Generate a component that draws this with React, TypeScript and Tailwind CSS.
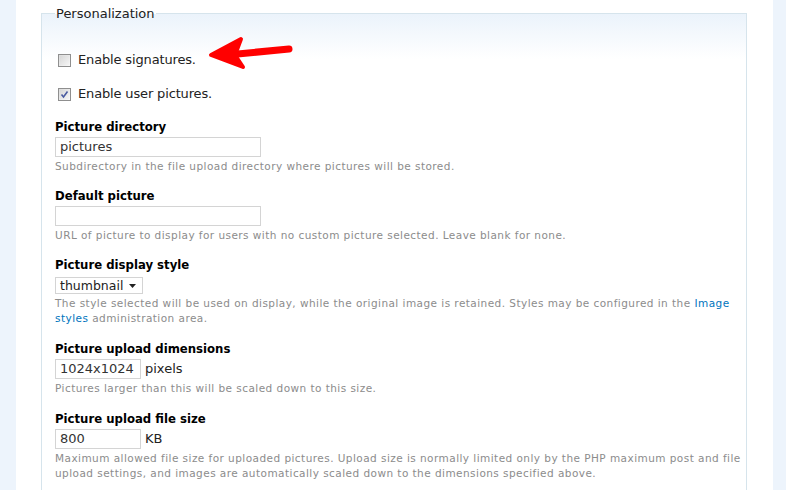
import React from 'react';

function Description({ children }: { children: React.ReactNode }) {
  return <div className="mt-[2px] text-[10.5px] leading-[15px] tracking-[0.45px] text-[#8c8c8c]">{children}</div>;
}

function Label({ children }: { children: React.ReactNode }) {
  return (
    <div className="font-['DejaVu_Sans_Condensed','DejaVu_Sans',sans-serif] text-[13px] font-bold leading-[16px] text-black">
      {children}
    </div>
  );
}

function TextInput({ value, width }: { value: string; width: string }) {
  return (
    <div className={`${width} h-[20px] border border-[#d4d4d4] bg-white px-[4px] text-[13px] leading-[18px] text-[#333]`}>
      {value}
    </div>
  );
}

function Checkbox({ checked }: { checked?: boolean }) {
  return (
    <span className="flex h-[13px] w-[13px] items-center justify-center border border-[#8f8f8f] bg-[linear-gradient(135deg,#dcdcdc,#f8f8f8)]">
      <span className="flex h-[9px] w-[9px] items-center justify-center bg-[linear-gradient(135deg,#d8d8d8,#f4f4f4)]">
        {checked && (
          <svg width="9" height="9" viewBox="0 0 9 9">
            <path d="M1.5 4.5 L3.5 7 L7.5 1.5" fill="none" stroke="#4a5ba0" strokeWidth="1.6" />
          </svg>
        )}
      </span>
    </span>
  );
}

function Arrow() {
  return (
    <svg className="absolute left-[205px] top-[34px]" width="92" height="38" viewBox="0 0 92 38">
      <path d="M84 15 L22 21" stroke="#ff0000" strokeWidth="7" strokeLinecap="round" />
      <path d="M36 5 L6 21 L38 33 L30 21 Z" fill="#ff0000" stroke="#ff0000" strokeWidth="4" strokeLinejoin="round" />
    </svg>
  );
}

export default function App() {
  return (
    <div className="relative flex h-[490px] w-[786px] overflow-hidden bg-white font-['DejaVu_Sans',Verdana,sans-serif]">
      <div className="w-[16px] shrink-0 bg-[#edf4fc]" />
      <div className="flex-1 pl-[25px] pr-[26px] pt-[6px]">
        <fieldset className="h-[600px] border border-[#d6e4ec] bg-[linear-gradient(#ebf3fb,#ffffff_45px)] pl-[13px] pr-[4px] pt-[14px]">
          <legend className="px-[1px] text-[13px] leading-[15px] text-[#222]">Personalization</legend>

          <div className="flex flex-col">
            <label className="flex items-center gap-[7px] pl-[3px] pt-[17px] text-[13px] leading-[16px] tracking-[-0.15px] text-[#222]">
              <Checkbox />
              Enable signatures.
            </label>
            <label className="mt-[18px] flex items-center gap-[7px] pl-[3px] text-[13px] leading-[16px] tracking-[-0.15px] text-[#222]">
              <Checkbox checked />
              Enable user pictures.
            </label>

            <div className="mt-[17px]">
              <Label>Picture directory</Label>
              <div className="mt-[2px]">
                <TextInput value="pictures" width="w-[206px]" />
              </div>
              <Description>Subdirectory in the file upload directory where pictures will be stored.</Description>
            </div>

            <div className="mt-[14px]">
              <Label>Default picture</Label>
              <div className="mt-[2px]">
                <TextInput value="" width="w-[206px]" />
              </div>
              <Description>URL of picture to display for users with no custom picture selected. Leave blank for none.</Description>
            </div>

            <div className="mt-[14px]">
              <Label>Picture display style</Label>
              <div className="mt-[4px] flex h-[17px] w-[88px] items-center justify-between border border-[#d4d4d4] bg-white pl-[4px] pr-[6px] text-[12.5px] leading-[15px] text-[#222]">
                thumbnail
                <svg width="7" height="4" viewBox="0 0 7 4">
                  <path d="M0 0 H7 L3.5 4 Z" fill="#222" />
                </svg>
              </div>
              <Description>
                The style selected will be used on display, while the original image is retained. Styles may be configured in the{' '}
                <a className="text-[#0074bd]">Image</a> <a className="text-[#0074bd]">styles</a> administration area.
              </Description>
            </div>

            <div className="mt-[15px]">
              <Label>Picture upload dimensions</Label>
              <div className="mt-[2px] flex items-center gap-[4px] text-[13px] text-[#222]">
                <TextInput value="1024x1024" width="w-[86px]" />
                pixels
              </div>
              <Description>Pictures larger than this will be scaled down to this size.</Description>
            </div>

            <div className="mt-[15px]">
              <Label>Picture upload file size</Label>
              <div className="mt-[2px] flex items-center gap-[4px] text-[13px] text-[#222]">
                <TextInput value="800" width="w-[86px]" />
                KB
              </div>
              <Description>
                Maximum allowed file size for uploaded pictures. Upload size is normally limited only by the PHP maximum post and file upload settings, and images are automatically scaled down to the dimensions specified above.
              </Description>
            </div>
          </div>
        </fieldset>
      </div>
      <div className="w-[13px] shrink-0 bg-[#edf4fc]" />
      <Arrow />
    </div>
  );
}
